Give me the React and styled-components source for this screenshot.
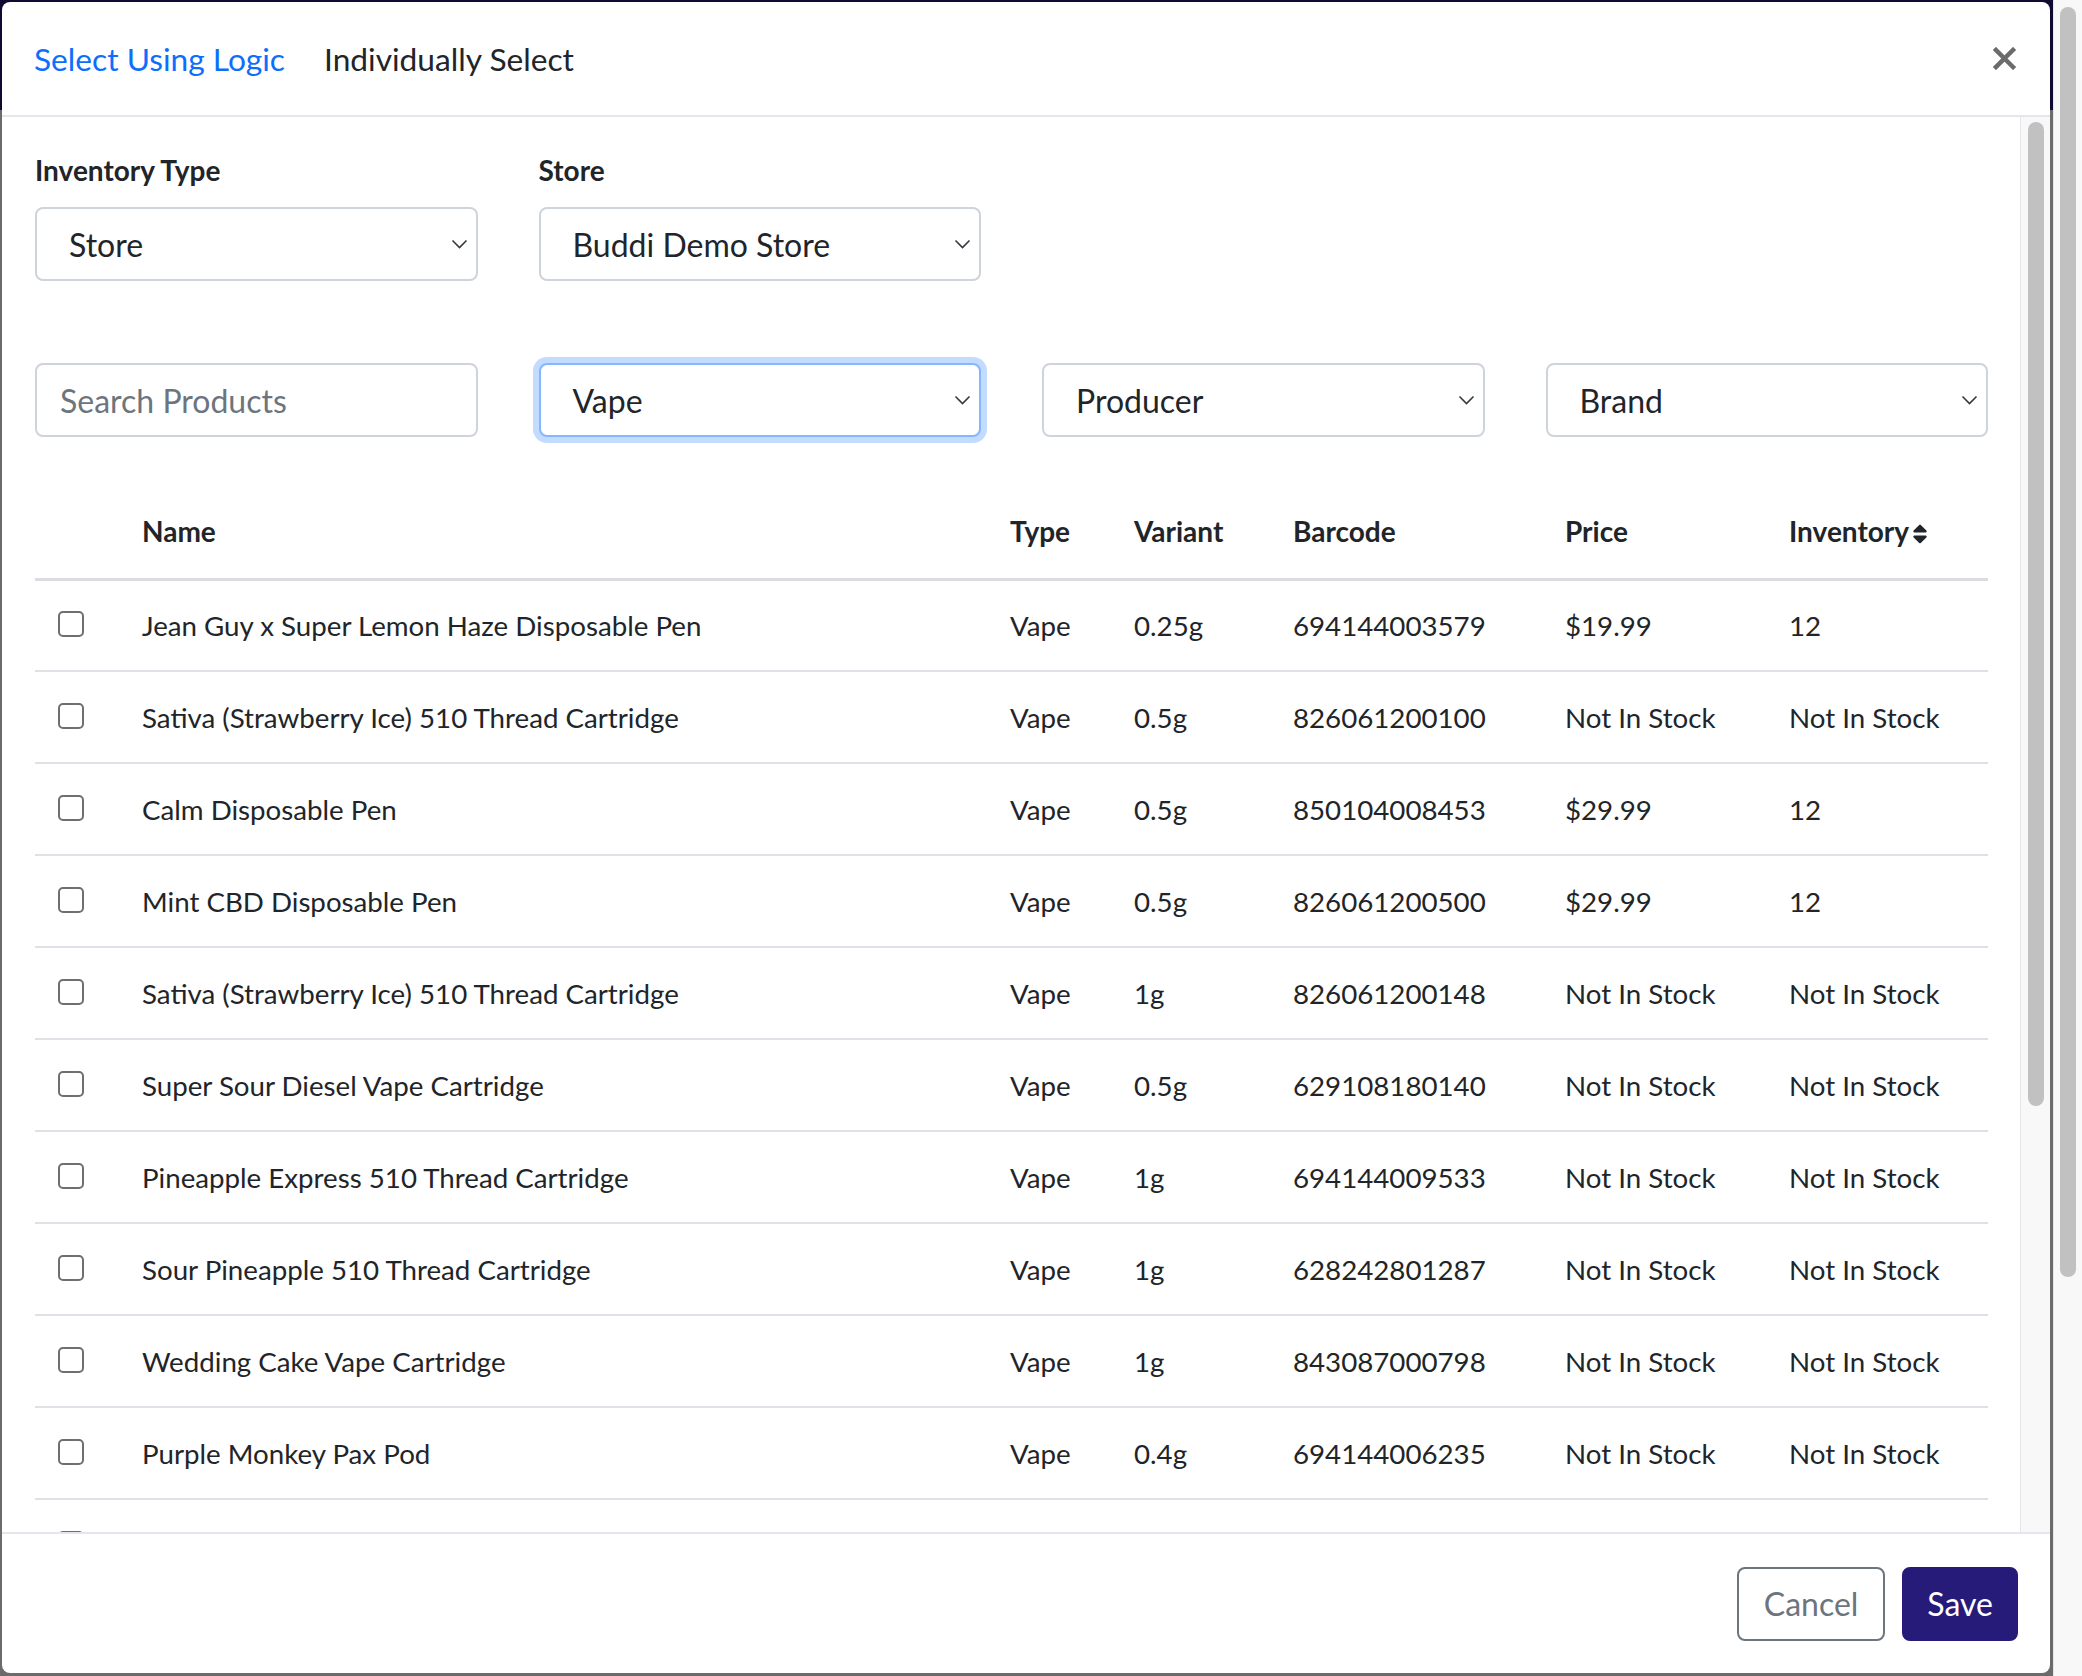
import React from 'react';
import styled, { createGlobalStyle } from 'styled-components';
import { FaSort } from 'react-icons/fa';

// global
const GlobalStyle = createGlobalStyle`
  html, body {
    height: 100%;
  }
  body {
    margin: 0;
    overflow: hidden;
    font-family: Lato, 'Noto Sans', sans-serif;
    color: #212529;
  }
  * {
    box-sizing: border-box;
  }
`;

// window: page + browser scrollbar
const Window = styled.div`
  display: flex;
  height: 100vh;
`;
const Stage = styled.div`
  flex: 1;
  position: relative;
  display: flex;
  flex-direction: column;
  background: #ffffff;
`;
const Navbar = styled.div`
  height: 110px;
  background: #261a78;
`;
const Backdrop = styled.div`
  position: absolute;
  inset: 0;
  background: rgba(0, 0, 0, 0.58);
  display: flex;
  padding: 2px 3px 3px 2px;
`;
const ScrollTrack = styled.div`
  width: ${props => props.$width}px;
  flex-shrink: 0;
  background: #f8f8f8;
  border-left: 1px solid #e6e6e6;
  padding: ${props => props.$inset};
`;
const ScrollThumb = styled.div`
  height: ${props => props.$length}px;
  border-radius: 8px;
  background: #c1c1c1;
`;

// modal
const Modal = styled.div`
  flex: 1;
  display: flex;
  flex-direction: column;
  background: #ffffff;
  border-radius: 8px;
  overflow: hidden;
`;
const Header = styled.div`
  height: 115px;
  flex-shrink: 0;
  display: flex;
  align-items: center;
  gap: 39px;
  padding: 0 34px 0 32px;
  border-bottom: 2px solid #e3e6ea;
`;
const Tab = styled.div`
  font-size: 31.7px;
  line-height: 40px;
  color: ${props => (props.$active ? '#0d6efd' : '#212529')};
  cursor: pointer;
`;
const CloseButton = styled.button`
  margin-left: auto;
  border: 0;
  background: none;
  padding: 0;
  width: 24px;
  height: 24px;
  display: flex;
  align-items: center;
  justify-content: center;
  cursor: pointer;
`;
const BodyRow = styled.div`
  flex: 1;
  min-height: 0;
  display: flex;
`;
const Body = styled.div`
  flex: 1;
  min-width: 0;
  overflow: hidden;
  padding: 36px 32px 0 33px;
`;
const FilterGrid = styled.div`
  display: grid;
  grid-template-columns: repeat(4, minmax(0, 1fr));
  column-gap: 61px;
  margin-top: ${props => props.$top || 0}px;
`;
const Field = styled.div`
  display: flex;
  flex-direction: column;
`;
const Label = styled.div`
  font-size: 28px;
  line-height: 34px;
  font-weight: 700;
  margin-bottom: 20px;
`;
const SelectBox = styled.div`
  height: 74px;
  display: flex;
  align-items: center;
  justify-content: space-between;
  padding: 0 8px 0 32px;
  border: 2px solid ${props => (props.$focused ? '#86b7fe' : '#ced4da')};
  border-radius: 8px;
  box-shadow: ${props =>
    props.$focused ? '0 0 0 6px rgba(13, 110, 253, 0.25)' : 'none'};
  font-size: 32px;
  color: #212529;
  background: #ffffff;
`;
const SearchInput = styled.input`
  width: 100%;
  min-width: 0;
  height: 74px;
  padding: 0 23px;
  border: 2px solid #ced4da;
  border-radius: 8px;
  font-family: Lato, 'Noto Sans', sans-serif;
  font-size: 32px;
  color: #212529;
  outline: none;

  &::placeholder {
    color: #6c757d;
  }
`;
const Table = styled.table`
  width: 100%;
  border-collapse: collapse;
  table-layout: fixed;
  margin-top: 48px;
  font-size: 27.7px;
`;
const HeadCell = styled.th`
  height: 94px;
  padding: 0 24px;
  text-align: left;
  font-size: 28px;
  font-weight: 700;
  border-bottom: 3px solid #dadbe3;
  white-space: nowrap;
`;
const SortIcon = styled(FaSort)`
  width: 16px;
  height: 24px;
  margin-left: 3px;
  vertical-align: -4px;
  color: #212529;
`;
const Row = styled.tr`
  border-bottom: 2px solid #dee2e6;
`;
const Cell = styled.td`
  height: 92px;
  padding: ${props => (props.$check ? '0 0 0 23px' : '0 24px')};
  white-space: nowrap;
  vertical-align: middle;
`;
const CheckBox = styled.input.attrs({ type: 'checkbox' })`
  appearance: none;
  display: block;
  width: 26px;
  height: 26px;
  margin: -3px 0 0;
  border: 2px solid #6f6f6f;
  border-radius: 5px;
  background: #ffffff;
`;
const Footer = styled.div`
  height: 141px;
  flex-shrink: 0;
  display: flex;
  align-items: center;
  justify-content: flex-end;
  gap: 17px;
  padding: 0 32px;
  border-top: 2px solid #e3e6ea;
`;
const Button = styled.button`
  height: 74px;
  padding: 0 ${props => (props.$primary ? 23 : 25)}px;
  border-radius: 8px;
  border: 2px solid ${props => (props.$primary ? '#271b79' : '#6c757d')};
  background: ${props => (props.$primary ? '#271b79' : '#ffffff')};
  color: ${props => (props.$primary ? '#ffffff' : '#6c757d')};
  font-family: Lato, 'Noto Sans', sans-serif;
  font-size: 32px;
  cursor: pointer;
`;

const Chevron = () => (
  <svg width="17" height="10" viewBox="0 0 17 10" fill="none">
    <path d="M1.5 1.5L8.5 8.5L15.5 1.5" stroke="#343a40" strokeWidth="1.6" />
  </svg>
);

const CloseIcon = () => (
  <svg width="23" height="23" viewBox="0 0 23 23">
    <path
      d="M3 3L20 20M20 3L3 20"
      stroke="#6b6b6b"
      strokeWidth="4.5"
      strokeLinecap="square"
    />
  </svg>
);

const NIS = 'Not In Stock';
const products = [
  ['Jean Guy x Super Lemon Haze Disposable Pen', '0.25g', '694144003579', '$19.99', '12'],
  ['Sativa (Strawberry Ice) 510 Thread Cartridge', '0.5g', '826061200100', NIS, NIS],
  ['Calm Disposable Pen', '0.5g', '850104008453', '$29.99', '12'],
  ['Mint CBD Disposable Pen', '0.5g', '826061200500', '$29.99', '12'],
  ['Sativa (Strawberry Ice) 510 Thread Cartridge', '1g', '826061200148', NIS, NIS],
  ['Super Sour Diesel Vape Cartridge', '0.5g', '629108180140', NIS, NIS],
  ['Pineapple Express 510 Thread Cartridge', '1g', '694144009533', NIS, NIS],
  ['Sour Pineapple 510 Thread Cartridge', '1g', '628242801287', NIS, NIS],
  ['Wedding Cake Vape Cartridge', '1g', '843087000798', NIS, NIS],
  ['Purple Monkey Pax Pod', '0.4g', '694144006235', NIS, NIS],
  ['Blue Dream 510 Thread Cartridge', '0.5g', '694144007102', NIS, NIS],
];

const columns = [83, 868, 124, 159, 272, 224, 223];

const App = () => {
  return (
    <Window>
      <GlobalStyle />
      <Stage>
        <Navbar />
        <Backdrop>
          <Modal>
            <Header>
              <Tab $active>Select Using Logic</Tab>
              <Tab>Individually Select</Tab>
              <CloseButton aria-label="Close">
                <CloseIcon />
              </CloseButton>
            </Header>

            <BodyRow>
              <Body>
                <FilterGrid>
                  <Field>
                    <Label>Inventory Type</Label>
                    <SelectBox>
                      Store
                      <Chevron />
                    </SelectBox>
                  </Field>
                  <Field>
                    <Label>Store</Label>
                    <SelectBox>
                      Buddi Demo Store
                      <Chevron />
                    </SelectBox>
                  </Field>
                </FilterGrid>

                <FilterGrid $top={82}>
                  <SearchInput placeholder="Search Products" />
                  <SelectBox $focused>
                    Vape
                    <Chevron />
                  </SelectBox>
                  <SelectBox>
                    Producer
                    <Chevron />
                  </SelectBox>
                  <SelectBox>
                    Brand
                    <Chevron />
                  </SelectBox>
                </FilterGrid>

                <Table>
                  <colgroup>
                    {columns.map((width, index) => (
                      <col key={index} style={{ width }} />
                    ))}
                  </colgroup>
                  <thead>
                    <tr>
                      <HeadCell />
                      <HeadCell>Name</HeadCell>
                      <HeadCell>Type</HeadCell>
                      <HeadCell>Variant</HeadCell>
                      <HeadCell>Barcode</HeadCell>
                      <HeadCell>Price</HeadCell>
                      <HeadCell>
                        Inventory
                        <SortIcon />
                      </HeadCell>
                    </tr>
                  </thead>
                  <tbody>
                    {products.map((product, index) => (
                      <Row key={index}>
                        <Cell $check>
                          <CheckBox />
                        </Cell>
                        <Cell>{product[0]}</Cell>
                        <Cell>Vape</Cell>
                        <Cell>{product[1]}</Cell>
                        <Cell>{product[2]}</Cell>
                        <Cell>{product[3]}</Cell>
                        <Cell>{product[4]}</Cell>
                      </Row>
                    ))}
                  </tbody>
                </Table>
              </Body>
              <ScrollTrack $width={30} $inset="5px 6px 0 7px">
                <ScrollThumb $length={984} />
              </ScrollTrack>
            </BodyRow>

            <Footer>
              <Button>Cancel</Button>
              <Button $primary>Save</Button>
            </Footer>
          </Modal>
        </Backdrop>
      </Stage>
      <ScrollTrack $width={29} $inset="7px 6px 0 6px">
        <ScrollThumb $length={1270} />
      </ScrollTrack>
    </Window>
  );
};

export default App;
